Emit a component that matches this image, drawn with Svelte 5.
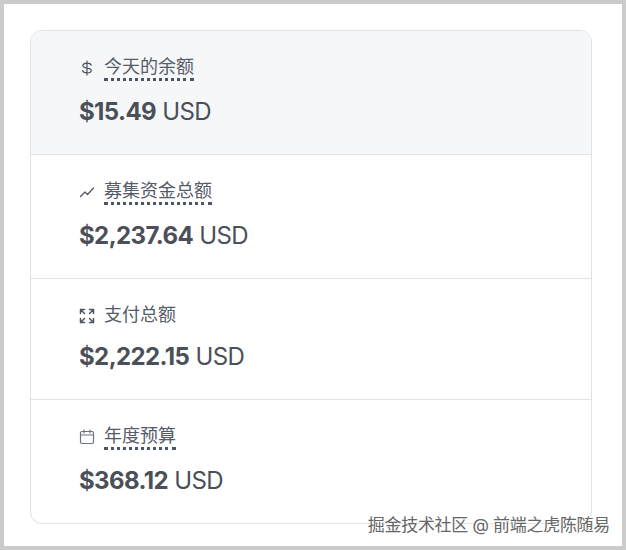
<script>
  const stats = [
    { label: "今天的余额", amount: "$15.49", icon: "dollar", dotted: true, active: true },
    { label: "募集资金总额", amount: "$2,237.64", icon: "trend", dotted: true },
    { label: "支付总额", amount: "$2,222.15", icon: "expand", dotted: false },
    { label: "年度预算", amount: "$368.12", icon: "calendar", dotted: true },
  ];
</script>

<div class="frame">
  <div class="card">
    {#each stats as stat}
      <div class="row" class:active={stat.active}>
        <div class="label-line">
          <span class="icon">
            {#if stat.icon === "dollar"}
              <svg viewBox="0 0 16 16" width="16" height="16"><path d="M12.200 5.200C11.800 3.900 10.200 3.200 8 3.200 5.600 3.200 3.900 4.200 3.900 5.700c0 3.300 8.400 1.500 8.400 4.700 0 1.500-1.800 2.400-4.300 2.400-2.400 0-4-.8-4.400-2.200M8 1v14" /></svg>
            {:else if stat.icon === "trend"}
              <svg viewBox="0 0 16 16" width="16" height="16"><path d="M1.500 12.500 6 8l2.500 2.500 6-6.500" /></svg>
            {:else if stat.icon === "expand"}
              <svg viewBox="0 0 16 16" width="16" height="16"><path class="bold" d="M1.500 5.500v-4h4M1.500 1.500l4 4M14.500 5.500v-4h-4M14.500 1.500l-4 4M1.500 10.500v4h4M1.500 14.500l4-4M14.500 10.500v4h-4M14.500 14.500l-4-4" /></svg>
            {:else}
              <svg viewBox="0 0 16 16" width="16" height="16"><rect class="thin" x="1.500" y="2.500" width="13" height="12" rx="1.500" /><path class="thin" d="M1.500 6h13M5 1v3M11 1v3" /></svg>
            {/if}
          </span>
          <span class="label" class:dotted={stat.dotted}>{stat.label}</span>
        </div>
        <div class="value"><strong>{stat.amount}</strong> USD</div>
      </div>
    {/each}
  </div>
  <div class="watermark">掘金技术社区 @ 前端之虎陈随易</div>
</div>

<style>
:global(body) {
  margin: 0;
  background: #fff;
}
.frame {
  position: relative;
  box-sizing: border-box;
  width: 626px;
  height: 550px;
  border: 4px solid #cbcbcb;
  padding: 26px 30px 0 26px;
  font-family: Inter, "Noto Sans CJK SC", sans-serif;
  color: #4b5563;
}
.card {
  border: 1px solid #e0e2e6;
  border-radius: 12px;
  overflow: hidden;
}
.row {
  padding: 24px 24px 0 48px;
  height: 99px;
  border-top: 1px solid #e0e2e6;
}
.row:first-child {
  border-top: none;
}
.row:nth-child(3) {
  height: 96px;
}
.row:nth-child(3) .value {
  margin-top: 12px;
}
.active {
  background: #f5f7f9;
}
.label-line {
  display: flex;
  align-items: flex-start;
  gap: 9px;
  font-size: 18px;
  line-height: 24px;
  height: 26px;
  color: #555c68;
}
.icon {
  width: 16px;
  height: 16px;
  margin-top: 5px;
  display: flex;
}
.icon svg {
  fill: none;
  stroke: #4b5563;
  stroke-width: 1.200;
  stroke-linecap: round;
  stroke-linejoin: round;
}
.icon .thin {
  stroke: #6b7280;
}
.icon .bold {
  stroke-width: 1.500;
}
.label.dotted {
  height: 23px;
  border-bottom: 3px dotted #4b5563;
}
.value {
  margin-top: 15px;
  font-size: 24px;
  line-height: 32px;
  letter-spacing: -0.6px;
  color: #4b4f57;
}
.value strong {
  font-weight: 700;
}
.watermark {
  position: absolute;
  right: 12px;
  bottom: 9px;
  font-size: 17px;
  line-height: 24px;
  letter-spacing: -0.3px;
  color: #666;
  text-shadow: 0 0 2px #fff, 0 0 2px #fff, 0 0 3px #fff;
}
</style>
